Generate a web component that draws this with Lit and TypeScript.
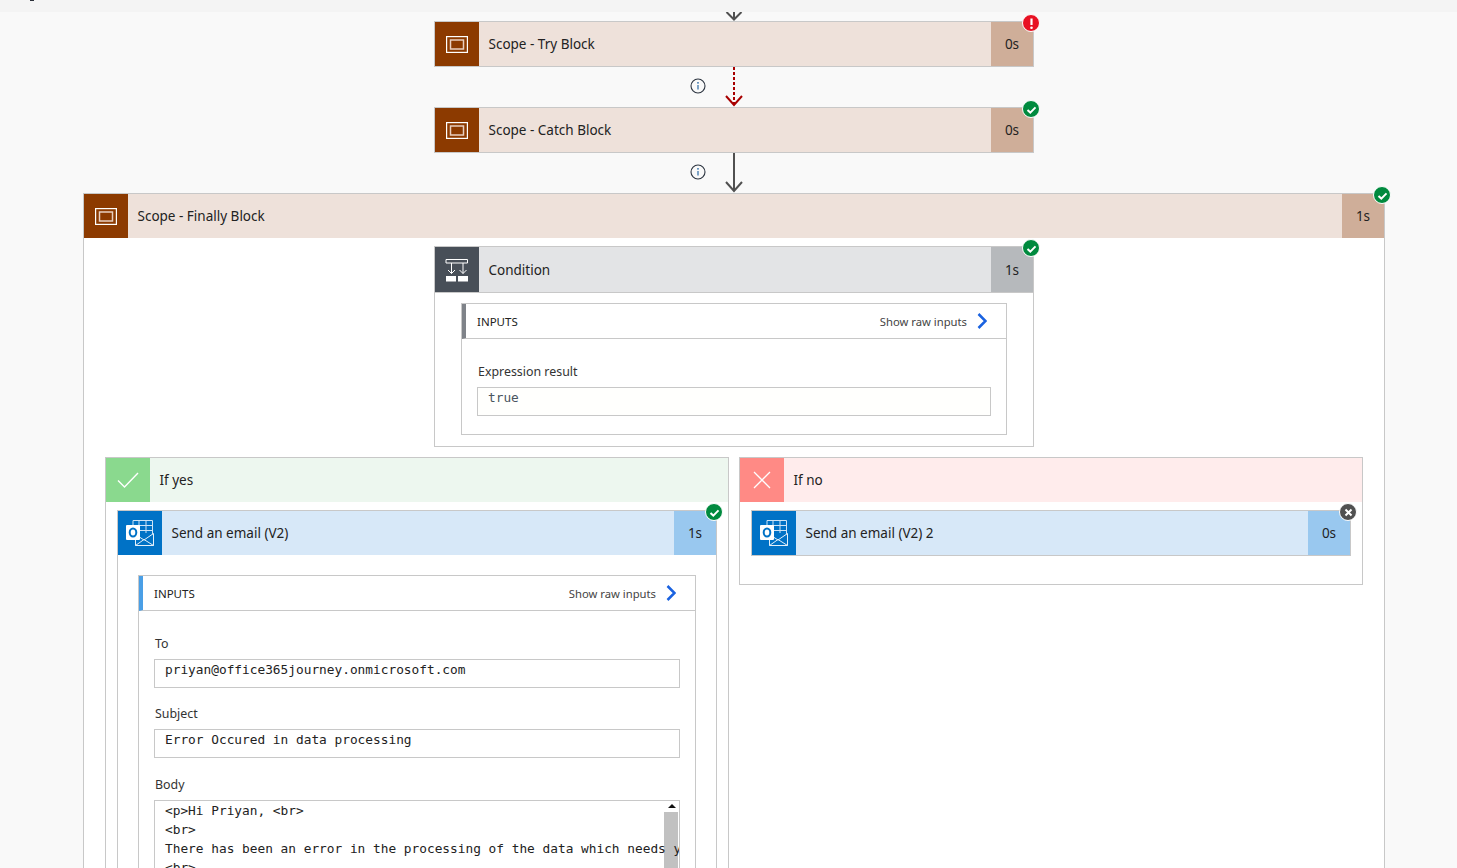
import { LitElement, html, css, svg } from "lit";
import { customElement } from "lit/decorators.js";

const scopeIcon = html`<svg width="22" height="17" viewBox="0 0 22 17" fill="none"><rect x="0.600" y="0.600" width="20.800" height="15.800" stroke="#fff" stroke-width="1.200"/><rect x="4.500" y="4" width="13" height="9" stroke="#e8cfc0" stroke-width="1.500"/></svg>`;
const conditionIcon = html`<svg width="24" height="24" viewBox="0 0 24 24" fill="none"><path d="M1 1.500h21.500v3.500H1zM6.500 5v10.500M18 5v10.500" stroke="#fff" stroke-width="1"/><path d="M3 12l3.500 3.500L10 12M14.500 12l3.500 3.500 3.500-3.500" stroke="#fff" stroke-width="1"/><rect x="1" y="18" width="10" height="5.500" fill="#fff"/><rect x="13" y="18" width="10" height="5.500" fill="#fff"/></svg>`;
const outlookIcon = html`<svg width="28" height="26" viewBox="0 0 28 26" fill="none">
  <path d="M7 5V0.500h19.500V15" stroke="#cfe4f6" stroke-width="1"/>
  <path d="M13 1v14M20 1v12M8 5.500h18M13 10.500h13" stroke="#cfe4f6" stroke-width="1"/>
  <path d="M9.500 14.500v11h18v-12L18 20l-8.500-5.500zM9.500 25.500l8.500-6 9.500 6" stroke="#e4f0fa" stroke-width="1" fill="#0072c6"/>
  <rect x="0" y="5" width="14" height="15" rx="1" fill="#fff"/>
  <ellipse cx="7" cy="12.500" rx="3.300" ry="4" stroke="#0072c6" stroke-width="2"/>
</svg>`;
const checkMark = svg`<path d="M4.500 9l2.800 2.600 5.200-5.200" stroke="#fff" stroke-width="2" fill="none"/>`;
const crossMark = svg`<path d="M5.500 5.500l6 6M11.500 5.500l-6 6" stroke="#fff" stroke-width="2" fill="none"/>`;
const bangMark = svg`<path d="M8.500 3.500v6.500" stroke="#fff" stroke-width="2.200"/><circle cx="8.500" cy="12.800" r="1.300" fill="#fff"/>`;

const badge = (kind: "ok" | "err" | "skip") =>
  html`<span class="badge ${kind}"><svg width="17" height="17" viewBox="0 0 17 17">${kind === "ok" ? checkMark : kind === "err" ? bangMark : crossMark}</svg></span>`;

const infoIcon = html`<svg class="info" width="16" height="16" viewBox="0 0 16 16" fill="none"><circle cx="8" cy="8" r="7" stroke="#2c3440" stroke-width="1.100"/><path d="M8 7v4.500" stroke="#2a6aa5" stroke-width="1.200"/><circle cx="8" cy="4.800" r=".9" fill="#2a6aa5"/></svg>`;

const connector = (kind: "fail" | "plain") => html`
  <div class="connector">
    ${infoIcon}
    ${kind === "fail"
      ? html`<svg width="22" height="40" viewBox="0 0 22 40" fill="none"><path d="M11 0v38" stroke="#a80000" stroke-width="2" stroke-dasharray="3 2"/><path d="M3 29l8 9 8-9" stroke="#a80000" stroke-width="2"/></svg>`
      : html`<svg width="22" height="40" viewBox="0 0 22 40" fill="none"><path d="M11 0v38" stroke="#505050" stroke-width="2"/><path d="M3 29l8 9 8-9" stroke="#505050" stroke-width="2"/></svg>`}
    <span></span>
  </div>`;

@customElement("app-root")
export class AppRoot extends LitElement {
  static styles = css`
    :host { display: block; width: 1457px; height: 868px; overflow: hidden; background: #f9f9f9; font-family: "Noto Sans", "Open Sans", sans-serif; font-size: 13.500px; color: #222; }
    * { box-sizing: border-box; }
    .topbar { height: 12px; background: #f4f4f4; padding-left: 30px; }
    .topbar i { display: block; width: 4px; height: 1px; background: #2b2f38; }
    .flow { width: 1302px; margin-left: 83px; display: flex; flex-direction: column; align-items: center; }
    .tip { display: block; height: 9px; }
    .connector { width: 600px; height: 40px; display: grid; grid-template-columns: 1fr 22px 1fr; justify-items: end; }
    .connector > span { display: block; }
    .info { margin: 11px 17px 0 0; }

    .card { position: relative; width: 600px; border: 1px solid #c8c8c8; background: #fff; }
    .head { display: flex; height: 44px; align-items: stretch; }
    .icon { width: 44px; flex: none; display: flex; align-items: center; justify-content: center; }
    .title { flex: 1; display: flex; align-items: center; padding-left: 9.500px; }
    .dur { width: 42px; flex: none; display: flex; align-items: center; justify-content: center; }
    .scope .icon { background: #8c3a00; } .scope .title { background: #eee1da; } .scope .dur { background: #cfae99; }
    .cond .icon { background: #484f58; } .cond .title { background: #e3e4e6; } .cond .dur { background: #b6b9bc; }
    .mail .icon { background: #0072c6; } .mail .title { background: #d7e8f8; } .mail .dur { background: #99c8ef; }
    .cond { border-bottom: 1px solid #c8c8c8; height: 46px; }

    .badge { position: absolute; top: -8px; right: -7px; width: 18px; height: 18px; border-radius: 50%; border: 1px solid #fff; display: flex; align-items: center; justify-content: center; background: #008a3e; }
    .badge svg { display: block; flex: none; }
    .badge.err { background: #e81123; }
    .badge.skip { background: #505050; }

    .scopebox { position: relative; width: 1302px; border: 1px solid #c8c8c8; border-bottom: 0; background: #fff; }
    .scopebody { padding: 8px 21px 0; display: flex; flex-direction: column; align-items: center; }

    .condbody { padding: 10px 26px 11px; }
    .box { background: #fff; border: 1px solid #c8c8c8; }
    .boxhead { height: 35px; display: flex; align-items: center; border-left: 4px solid #7f8389; border-bottom: 1px solid #c8c8c8; padding: 0 19px 0 11px; font-size: 11.500px; }
    .boxhead.blue { border-left-color: #4a9fe6; }
    .boxhead b { font-weight: 400; flex: 1; }
    .boxhead small { font-size: 11.250px; color: #444; margin-right: 10px; }
    .boxhead svg { display: block; }
    .boxbody { padding: 25px 15px 18px; display: flex; flex-direction: column; gap: 18px; }
    .field label { display: block; line-height: 16px; margin-bottom: 7px; font-size: 12.400px; color: #333; padding-left: 1px; }
    .field.last { margin-top: 1px; }
    .value { height: 29px; border: 1px solid #c8c8c8; padding: 0 10px; background: #fff; font-family: "DejaVu Sans Mono", "Liberation Mono", monospace; font-size: 12.800px; line-height: 19px; color: #222; overflow: hidden; }
    .value div { white-space: pre; }
    .value.soft { color: #4a5560; background: #fffffd; }
    .value.tall { height: 120px; position: relative; }
    .value.tall div { position: relative; }
    .bar { position: absolute; top: 0; bottom: 0; right: 0; width: 15px; background: #fff; }
    .bar i { display: block; width: 0; height: 0; margin: 3px auto 0; border: 4px solid transparent; border-top: 0; border-bottom: 4px solid #111; }
    .bar u { display: block; position: absolute; top: 11px; bottom: 0; left: 0; right: 1px; background: #c1c1c1; }

    .branches { display: grid; grid-template-columns: 624px 624px; gap: 10px; align-items: start; margin-top: 10px; width: 1258px; }
    .branch { border: 1px solid #c8c8c8; background: #fff; }
    .bhead { display: flex; height: 44px; }
    .yes .bhead .icon { background: #8ad98e; } .yes .bhead .title { background: #edf7ef; }
    .no .bhead .icon { background: #ff8a85; } .no .bhead .title { background: #ffecec; }
    .bbody { padding: 8px 11px 28px; }
    .mailbody { padding: 20px; }
    .branch.yes .bbody { padding-bottom: 0; }
  `;

  private inputsHead(blue: boolean) {
    return html`<div class="boxhead ${blue ? "blue" : ""}">
      <b>INPUTS</b><small>Show raw inputs</small>
      <svg width="10" height="16" viewBox="0 0 10 16" fill="none"><path d="M1.500 1l7 7-7 7" stroke="#1a62e0" stroke-width="2.500"/></svg>
    </div>`;
  }

  private field(label: string, value: string, soft = false) {
    return html`<div class="field"><label>${label}</label><div class="value ${soft ? "soft" : ""}"><div>${value}</div></div></div>`;
  }

  private stepHead(type: string, icon: unknown, title: string, dur: string) {
    return html`<div class="head ${type}">
      <div class="icon">${icon}</div><div class="title">${title}</div><div class="dur">${dur}</div>
    </div>`;
  }

  render() {
    return html`
      <div class="topbar"><i></i></div>
      <div class="flow">
        <svg class="tip" width="22" height="9" viewBox="0 0 22 9" fill="none"><path d="M11 0v7M3.500 0L11 7.500 18.500 0" stroke="#505050" stroke-width="2"/></svg>
        <div class="card">${this.stepHead("scope", scopeIcon, "Scope - Try Block", "0s")}${badge("err")}</div>
        ${connector("fail")}
        <div class="card">${this.stepHead("scope", scopeIcon, "Scope - Catch Block", "0s")}${badge("ok")}</div>
        ${connector("plain")}
        <div class="scopebox">
          ${this.stepHead("scope", scopeIcon, "Scope - Finally Block", "1s")}${badge("ok")}
          <div class="scopebody">
            <div class="card">
              ${this.stepHead("cond", conditionIcon, "Condition", "1s")}${badge("ok")}
              <div class="condbody">
                <div class="box">
                  ${this.inputsHead(false)}
                  <div class="boxbody">${this.field("Expression result", "true", true)}</div>
                </div>
              </div>
            </div>
            <div class="branches">
              <div class="branch yes">
                <div class="bhead">
                  <div class="icon"><svg width="22" height="16" viewBox="0 0 22 16" fill="none"><path d="M1 8.500l6.500 6.500L21 1" stroke="#fff" stroke-width="1.400"/></svg></div>
                  <div class="title">If yes</div>
                </div>
                <div class="bbody">
                  <div class="card">
                    ${this.stepHead("mail", outlookIcon, "Send an email (V2)", "1s")}${badge("ok")}
                    <div class="mailbody">
                      <div class="box">
                        ${this.inputsHead(true)}
                        <div class="boxbody">
                          ${this.field("To", "priyan@office365journey.onmicrosoft.com")}
                          ${this.field("Subject", "Error Occured in data processing")}
                          <div class="field last">
                            <label>Body</label>
                            <div class="value tall">
                              <span class="bar"><i></i><u></u></span>
                              <div>&lt;p&gt;Hi Priyan, &lt;br&gt;</div>
                              <div>&lt;br&gt;</div>
                              <div>There has been an error in the processing of the data which needs y</div>
                              <div>&lt;br&gt;</div>
                            </div>
                          </div>
                        </div>
                      </div>
                    </div>
                  </div>
                </div>
              </div>
              <div class="branch no">
                <div class="bhead">
                  <div class="icon"><svg width="18" height="18" viewBox="0 0 18 18" fill="none"><path d="M1 1l16 16M17 1L1 17" stroke="#fff" stroke-width="1.300"/></svg></div>
                  <div class="title">If no</div>
                </div>
                <div class="bbody">
                  <div class="card">${this.stepHead("mail", outlookIcon, "Send an email (V2) 2", "0s")}${badge("skip")}</div>
                </div>
              </div>
            </div>
          </div>
        </div>
      </div>
    `;
  }
}
